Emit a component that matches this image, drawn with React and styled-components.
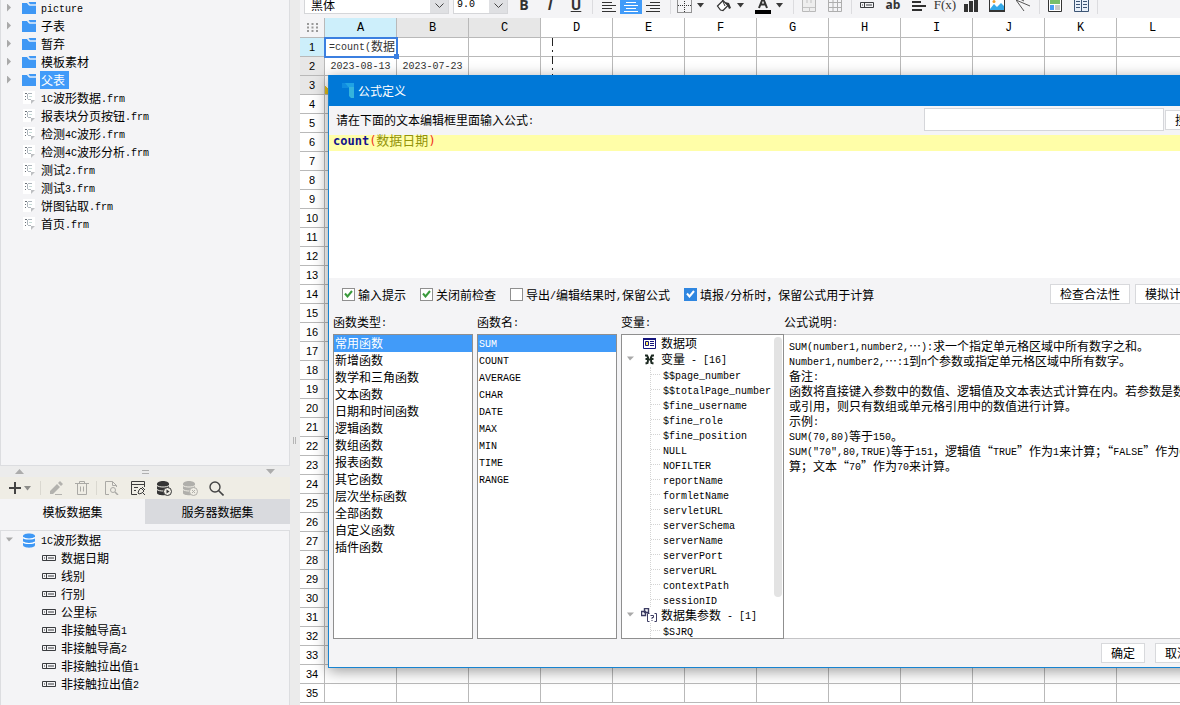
import React, { useState } from "react";
import styled, { createGlobalStyle } from "styled-components";

const folders = ["picture", "子表", "暂弃", "模板素材", "父表"];

const files = [
  "1C波形数据.frm",
  "报表块分页按钮.frm",
  "检测4C波形.frm",
  "检测4C波形分析.frm",
  "测试2.frm",
  "测试3.frm",
  "饼图钻取.frm",
  "首页.frm",
];

const fields = [
  "数据日期",
  "线别",
  "行别",
  "公里标",
  "非接触导高1",
  "非接触导高2",
  "非接触拉出值1",
  "非接触拉出值2",
];

const columns = ["A", "B", "C", "D", "E", "F", "G", "H", "I", "J", "K", "L"];
const rows = Array.from({ length: 35 }, (_, i) => i + 1);
const cells = { A1: "=count(数据", A2: "2023-08-13", B2: "2023-07-23" };

const functionTypes = [
  "常用函数",
  "新增函数",
  "数学和三角函数",
  "文本函数",
  "日期和时间函数",
  "逻辑函数",
  "数组函数",
  "报表函数",
  "其它函数",
  "层次坐标函数",
  "全部函数",
  "自定义函数",
  "插件函数",
];

const functionNames = [
  "SUM",
  "COUNT",
  "AVERAGE",
  "CHAR",
  "DATE",
  "MAX",
  "MIN",
  "TIME",
  "RANGE",
];

const variables = [
  "$$page_number",
  "$$totalPage_number",
  "$fine_username",
  "$fine_role",
  "$fine_position",
  "NULL",
  "NOFILTER",
  "reportName",
  "formletName",
  "servletURL",
  "serverSchema",
  "serverName",
  "serverPort",
  "serverURL",
  "contextPath",
  "sessionID",
];

const description = [
  "SUM(number1,number2,…):求一个指定单元格区域中所有数字之和。",
  "Number1,number2,…:1到n个参数或指定单元格区域中所有数字。",
  "备注:",
  "函数将直接键入参数中的数值、逻辑值及文本表达式计算在内。若参数是数组",
  "或引用，则只有数组或单元格引用中的数值进行计算。",
  "示例:",
  "SUM(70,80)等于150。",
  'SUM("70",80,TRUE)等于151，逻辑值“TRUE”作为1来计算；“FALSE”作为0来计',
  "算；文本“70”作为70来计算。",
];

// latin runs get the half-width face, everything else stays in the CJK face
const Mixed = ({ children }) => (
  <span>
    {children
      .split(/([\x20-\x7e]+)/)
      .filter(Boolean)
      .map((part, i) =>
        /^[\x20-\x7e]/.test(part) ? <Half key={i}>{part}</Half> : part
      )}
  </span>
);

const FolderIcon = () => (
  <svg width="14" height="12" viewBox="0 0 14 12">
    <path d="M0 1h5l2 2.500h7V12H0z" fill="#3f98f5" />
    <path d="M6.500 0H14v2.500H8z" fill="#3f98f5" />
    <path d="M5.500 .5l2 2.500H14" stroke="#d8e9fc" fill="none" />
  </svg>
);

const FileIcon = () => (
  <svg width="12" height="14" viewBox="0 0 12 14">
    <path d="M0 0h12v9l-4 4H0z" fill="#fff" />
    <path d="M8 13V9h4z" fill="#bdbfc2" />
    <path d="M2 2.500h2M2 5.500h1M2 8.500h1" stroke="#6d737a" />
    <path d="M4.500 3v5M5 2.500h4M5 8.500h3" stroke="#aeb6bd" fill="none" />
    <path d="M6 5.500h3" stroke="#c6dcd8" />
  </svg>
);

const DatabaseIcon = () => (
  <svg width="14" height="15" viewBox="0 0 14 15">
    <path
      d="M1 3c0-3.500 12-3.500 12 0v9c0 3.500-12 3.500-12 0z"
      fill="#3f98f5"
    />
    <path
      d="M1 4.500c2 2 10 2 12 0M1 9c2 2 10 2 12 0"
      stroke="#fff"
      strokeWidth="1.200"
      fill="none"
    />
  </svg>
);

const FieldIcon = () => (
  <svg width="14" height="7" viewBox="0 0 14 7">
    <path d="M.5 .5h13v5H.5zM4.500 1v5" fill="none" stroke="#3b3d40" />
    <path d="M2 3h1M6 3h6" stroke="#3b3d40" />
  </svg>
);

const Caret = ({ color = "#3a3a3a" }) => (
  <svg width="7" height="5" viewBox="0 0 7 5">
    <path d="M0 0h7L3.500 4.500z" fill={color} />
  </svg>
);

const Tick = ({ color }) => (
  <svg width="9" height="8" viewBox="0 0 9 8">
    <path d="M1 3.500l2.500 3L8 1" fill="none" stroke={color} strokeWidth="2" />
  </svg>
);

const Chevron = () => (
  <svg width="9" height="5" viewBox="0 0 9 5">
    <path d="M.5.5l4 4 4-4" fill="none" stroke="#444" />
  </svg>
);

const lines = {
  left: "M0 1.500h14M0 4.500h10M0 7.500h14M0 10.500h10M0 13.500h14",
  center: "M0 1.500h14M2 4.500h10M0 7.500h14M2 10.500h10M0 13.500h14",
  right: "M0 1.500h14M4 4.500h10M0 7.500h14M4 10.500h10M0 13.500h14",
};

const AlignIcon = ({ kind, color = "#333" }) => (
  <svg width="14" height="15" viewBox="0 0 14 15">
    <path d={lines[kind]} stroke={color} />
  </svg>
);

const BorderIcon = () => (
  <svg width="15" height="15" viewBox="0 0 15 15">
    <path
      d="M.5.5h14v14H.5zM7.500 1v13M1 7.500h13"
      fill="none"
      stroke="#333"
      strokeDasharray="1 1"
    />
  </svg>
);

const FillIcon = () => (
  <svg width="16" height="15" viewBox="0 0 16 15">
    <path
      d="M1.500 8L7 2.500l5 5L7 12.500 4.500 12z"
      fill="#fff"
      stroke="#333"
      strokeWidth="1.200"
    />
    <path d="M9 4l4 1 2 5-2 1-1.500-3.500z" fill="#333" />
    <path d="M6 1.500L9 8" stroke="#333" />
  </svg>
);

const ColorIcon = () => (
  <svg width="16" height="17" viewBox="0 0 16 17">
    <path
      d="M4 11L8 1l4 10M5.500 7.500h5"
      fill="none"
      stroke="#333"
      strokeWidth="2"
    />
    <path d="M0 13h16v4H0z" fill="#000" />
  </svg>
);

const MergeIcon = () => (
  <svg width="14" height="14" viewBox="0 0 14 14">
    <path d="M.5.5h13v13H.5z" fill="#eee" stroke="#b9b9b9" />
    <path d="M1 9.500h12M7.500 10v4M5 1v4M9 1v4" stroke="#c4c4c4" />
  </svg>
);

const SplitIcon = () => (
  <svg width="14" height="14" viewBox="0 0 14 14">
    <path
      d="M.5.5h13v13H.5zM1 4.500h12M1 9.500h12M5 1v12M9.500 1v12"
      fill="none"
      stroke="#aeaeae"
    />
  </svg>
);

const TextLinesIcon = () => (
  <svg width="14" height="14" viewBox="0 0 14 14">
    <path d="M0 4h9M0 8h14M0 12h10" stroke="#2f2f2f" strokeWidth="2" />
  </svg>
);

const ChartIcon = () => (
  <svg width="14" height="14" viewBox="0 0 14 14">
    <path d="M0 6h4v8H0zM5 3h4v11H5zM10 0h4v14h-4z" fill="#333" />
  </svg>
);

const ImageIcon = () => (
  <svg width="16" height="14" viewBox="0 0 16 14">
    <path d="M.5.5h15v13H.5z" fill="#fff" stroke="#333" />
    <path d="M1 11l4-5 3 3 4-4 3 3v5H1z" fill="#35a9e8" />
    <circle cx="5" cy="3.500" r="1.500" fill="#f0a030" />
    <path d="M0 12h16v2H0z" fill="#333" />
  </svg>
);

const SlashIcon = () => (
  <svg width="14" height="14" viewBox="0 0 14 14">
    <path d="M0 2l14 6M0 2l8 11M2 0l6 3" fill="none" stroke="#555" />
  </svg>
);

const ReportIcon = () => (
  <svg width="14" height="14" viewBox="0 0 14 14">
    <path d="M.5.5h13v13H.5z" fill="#fff" stroke="#333" />
    <path d="M2 2h10v4H2z" fill="#79bf6b" />
    <path d="M2 7h4v5H2z" fill="#4a9df5" />
    <path d="M7 7h5v5H7z" fill="#c9c9c9" />
  </svg>
);

const ColumnsIcon = () => (
  <svg width="15" height="14" viewBox="0 0 15 14">
    <path d="M.5.5h14v13H.5zM7.500 1v13" fill="#e8f0fa" stroke="#3c5575" />
    <path
      d="M2 3.500h4M2 6.500h4M2 9.500h4M9 3.500h4M9 6.500h4M9 9.500h4"
      stroke="#3c5575"
    />
  </svg>
);

const PlusIcon = () => (
  <svg width="12" height="12" viewBox="0 0 12 12">
    <path d="M6 0v12M0 6h12" stroke="#444" strokeWidth="2" />
  </svg>
);

const PencilIcon = () => (
  <svg width="14" height="14" viewBox="0 0 14 14">
    <path d="M1 10l7-7 3 3-7 7H1zM9 2l2-2 3 3-2 2z" fill="#b3b2ae" />
    <path d="M6 13.500h7" stroke="#b3b2ae" />
  </svg>
);

const TrashIcon = () => (
  <svg width="14" height="14" viewBox="0 0 14 14">
    <path
      d="M0 2.500h14M4.500 2V.5h5V2M2.500 3v10.500h9V3M5.500 5.500v5M8.500 5.500v5"
      fill="none"
      stroke="#aaa9a5"
    />
  </svg>
);

const PreviewIcon = () => (
  <svg width="14" height="14" viewBox="0 0 14 14">
    <path d="M4 13.500H.5V.5h7l4 4V6M7.500.5v4h4" fill="none" stroke="#aaa9a5" />
    <circle cx="8" cy="9" r="2.500" fill="none" stroke="#aaa9a5" />
    <path d="M10 11l3 3" stroke="#aaa9a5" strokeWidth="1.500" />
  </svg>
);

const EditSqlIcon = () => (
  <svg width="15" height="14" viewBox="0 0 15 14">
    <path d="M6 13.500H.5V.5h13V6M1 3.500h13" fill="none" stroke="#3d3d3d" />
    <path d="M3 6.500h4M3 9.500h2" stroke="#3d3d3d" />
    <path
      d="M7 12l1-3 2-2 3 3-2 2-3 1zM11 6l3 3M12 12l2 2"
      fill="none"
      stroke="#3d3d3d"
    />
  </svg>
);

const StackIcon = ({ color, cross }) => (
  <svg width="15" height="15" viewBox="0 0 15 15">
    <path d="M0 3c0-4 12-4 12 0v9c0 3-12 3-12 0z" fill={color} />
    <path
      d="M0 4.500c2 2 10 2 12 0M0 8.500c2 2 10 2 12 0"
      stroke="#efede5"
      fill="none"
    />
    <circle cx="10.500" cy="10.500" r="4" fill="#efede5" stroke={color} />
    {cross ? (
      <path d="M9 9l3 3M12 9l-3 3" stroke={color} />
    ) : (
      <path d="M9.500 8.500l3 2-3 2z" fill={color} />
    )}
  </svg>
);

const SearchIcon = () => (
  <svg width="15" height="15" viewBox="0 0 15 15">
    <circle cx="6" cy="6" r="5" fill="none" stroke="#444" strokeWidth="1.400" />
    <path d="M9.500 9.500l5 5" stroke="#444" strokeWidth="1.600" />
  </svg>
);

const DataItemIcon = () => (
  <svg width="13" height="11" viewBox="0 0 13 11">
    <path d="M.5.5h12v10H.5z" fill="#fff" stroke="#14147c" />
    <path d="M0 0h13v2H0z" fill="#14147c" />
    <path d="M2.500 3.500h3v4h-3z" fill="#ffef6a" stroke="#14147c" />
    <path d="M7 3.500h4M7 5.500h4M7 7.500h4" stroke="#14147c" />
  </svg>
);

const VariableIcon = () => (
  <svg width="11" height="11" viewBox="0 0 11 11">
    <path
      d="M1 1.500l2 0 1 2v1.500H1.500M10 1.500H8L7 3.500V5h2.500M1.500 9.500l2-.5.5-2.500M9.500 9.500L7.500 9 7 6.500M3 5.500h5"
      fill="none"
      stroke="#1d2a22"
      strokeWidth="2"
    />
  </svg>
);

const ParamIcon = () => (
  <svg width="16" height="15" viewBox="0 0 16 15">
    <path
      d="M.5 3.500h4v4h-4zM3.500.5h4v4h-4z"
      fill="#fff"
      stroke="#3d3d63"
      strokeWidth="1.400"
    />
    <path
      d="M8.500 5.500H6.500v8h2M13.500 5.500h2v8h-2"
      fill="none"
      stroke="#3d3d63"
    />
    <path d="M9.500 7.500h3v2h-1.500v1.500M11 12v1" fill="none" stroke="#3d3d63" />
  </svg>
);

const Logo = () => (
  <svg width="12" height="15" viewBox="0 0 12 15">
    <path d="M0 0h6v5H0z" fill="#0f8ce0" />
    <path d="M3 0h9v5H7z" fill="#1fa3e4" />
    <path d="M7 4h5v11H9l-2-2z" fill="#35b4dc" />
  </svg>
);

const Check = ({ id, text, tone, start }) => {
  const [on, setOn] = useState(start);
  return (
    <CheckLabel htmlFor={id}>
      <CheckBox $tone={tone} $on={on}>
        <input
          id={id}
          type="checkbox"
          checked={on}
          onChange={(e) => setOn(e.target.checked)}
        />
        {on && <Tick color={tone === "blue" ? "#fff" : "#3a9a3c"} />}
      </CheckBox>
      <Mixed>{text}</Mixed>
    </CheckLabel>
  );
};

const ListBox = ({ label, items }) => {
  const [current, setCurrent] = useState(items[0]);
  return (
    <Panel $width="140px">
      <PanelTitle>
        <Mixed>{label}</Mixed>
      </PanelTitle>
      <List role="listbox" aria-label={label}>
        {items.map((item) => (
          <Option
            key={item}
            role="option"
            aria-selected={item === current}
            $on={item === current}
            onClick={() => setCurrent(item)}
          >
            <Mixed>{item}</Mixed>
          </Option>
        ))}
      </List>
    </Panel>
  );
};

const Sidebar = () => {
  const [tab, setTab] = useState("模板数据集");
  return (
    <Side>
      <FileTree>
        {folders.map((name) => (
          <TreeRow key={name}>
            <Arrow />
            <IconSlot>
              <FolderIcon />
            </IconSlot>
            <TreeName $on={name === "父表"}>
              <Mixed>{name}</Mixed>
            </TreeName>
          </TreeRow>
        ))}
        {files.map((name) => (
          <TreeRow key={name}>
            <Arrow $hidden />
            <IconSlot>
              <FileIcon />
            </IconSlot>
            <TreeName>
              <Mixed>{name}</Mixed>
            </TreeName>
          </TreeRow>
        ))}
      </FileTree>
      <Splitter>
        <svg width="9" height="5" viewBox="0 0 9 5">
          <path d="M0 5h9L4.500 0z" fill="#acacac" />
        </svg>
        <svg width="7" height="4" viewBox="0 0 7 4">
          <path d="M0 .5h7M0 3.500h7" stroke="#b0b0b0" />
        </svg>
        <svg width="9" height="5" viewBox="0 0 9 5">
          <path d="M0 0h9L4.500 5z" fill="#acacac" />
        </svg>
      </Splitter>
      <DataTools>
        <AddButton aria-label="add">
          <PlusIcon />
          <Caret color="#8d8d8a" />
        </AddButton>
        <Bar />
        <DataButton aria-label="edit">
          <PencilIcon />
        </DataButton>
        <DataButton aria-label="delete">
          <TrashIcon />
        </DataButton>
        <Bar />
        <DataButton aria-label="preview">
          <PreviewIcon />
        </DataButton>
        <DataButton aria-label="edit query">
          <EditSqlIcon />
        </DataButton>
        <DataButton aria-label="connect">
          <StackIcon color="#353535" />
        </DataButton>
        <DataButton aria-label="disconnect">
          <StackIcon color="#b0afab" cross />
        </DataButton>
        <DataButton aria-label="search">
          <SearchIcon />
        </DataButton>
      </DataTools>
      <Tabs>
        {["模板数据集", "服务器数据集"].map((name) => (
          <Tab key={name} $on={tab === name} onClick={() => setTab(name)}>
            {name}
          </Tab>
        ))}
      </Tabs>
      <DataTree>
        <TreeRow>
          <Arrow $open />
          <IconSlot>
            <DatabaseIcon />
          </IconSlot>
          <TreeName>
            <Mixed>1C波形数据</Mixed>
          </TreeName>
        </TreeRow>
        {fields.map((name) => (
          <TreeRow key={name} $child>
            <IconSlot>
              <FieldIcon />
            </IconSlot>
            <TreeName>
              <Mixed>{name}</Mixed>
            </TreeName>
          </TreeRow>
        ))}
      </DataTree>
    </Side>
  );
};

const Toolbar = () => (
  <ToolbarClip>
    <Tools>
      <Picker $width="145px">
        <select aria-label="font" defaultValue="黑体">
          <option>黑体</option>
        </select>
        <span>
          <Chevron />
        </span>
      </Picker>
      <Picker $width="55px" $latin>
        <select aria-label="size" defaultValue="9.0">
          <option>9.0</option>
        </select>
        <span>
          <Chevron />
        </span>
      </Picker>
      <Group>
        <Tool $bold>B</Tool>
        <Tool $bold $italic>
          I
        </Tool>
        <Tool $bold $underline>
          U
        </Tool>
      </Group>
      <Group $wide>
        <Tool $narrow aria-label="align left">
          <AlignIcon kind="left" />
        </Tool>
        <Tool $narrow $on aria-label="align center">
          <AlignIcon kind="center" color="#fff" />
        </Tool>
        <Tool $narrow aria-label="align right">
          <AlignIcon kind="right" />
        </Tool>
      </Group>
      <Group>
        <DropTool aria-label="borders">
          <BorderIcon />
          <Caret />
        </DropTool>
        <DropTool aria-label="fill">
          <FillIcon />
          <Caret />
        </DropTool>
        <DropTool aria-label="text color">
          <ColorIcon />
          <Caret />
        </DropTool>
      </Group>
      <Group>
        <Tool aria-label="merge">
          <MergeIcon />
        </Tool>
        <Tool aria-label="split">
          <SplitIcon />
        </Tool>
      </Group>
      <Group>
        <Tool aria-label="field">
          <FieldIcon />
        </Tool>
        <Tool $small>ab</Tool>
        <Tool aria-label="rich text">
          <TextLinesIcon />
        </Tool>
        <Tool $serif>F(x)</Tool>
        <Tool aria-label="chart">
          <ChartIcon />
        </Tool>
        <Tool aria-label="image">
          <ImageIcon />
        </Tool>
        <Tool aria-label="slash">
          <SlashIcon />
        </Tool>
      </Group>
      <Group>
        <Tool aria-label="sub report">
          <ReportIcon />
        </Tool>
        <Tool aria-label="columns">
          <ColumnsIcon />
        </Tool>
      </Group>
    </Tools>
  </ToolbarClip>
);

const Sheet = () => (
  <SheetArea>
    <Grid>
      <colgroup>
        <col width="25" />
        {columns.map((c) => (
          <col key={c} width="72" />
        ))}
      </colgroup>
      <thead>
        <tr>
          <Corner>
            <svg width="11" height="9" viewBox="0 0 11 9">
              <path
                d="M0 1h11M0 4.500h11M0 8h11"
                stroke="#999"
                strokeWidth="2"
                strokeDasharray="2 2.500"
              />
            </svg>
          </Corner>
          {columns.map((c, i) => (
            <ColHead key={c} $active={i === 0} $used={i < 3}>
              {c}
            </ColHead>
          ))}
        </tr>
      </thead>
      <tbody>
        {rows.map((r) => (
          <tr key={r}>
            <RowHead $active={r === 1} $used={r <= 3}>
              {r}
            </RowHead>
            {columns.map((c) => (
              <Cell
                key={c}
                $active={c + r === "A1"}
                $marked={c + r === "A3"}
              >
                {cells[c + r] && (
                  <CellText>
                    <Mixed>{cells[c + r]}</Mixed>
                  </CellText>
                )}
              </Cell>
            ))}
          </tr>
        ))}
      </tbody>
    </Grid>
    <PageEdge />
    <Handle />
  </SheetArea>
);

const Dialog = () => (
  <Window role="dialog" aria-label="公式定义">
    <TitleBar>
      <Logo />
      公式定义
    </TitleBar>
    <SearchRow>
      <label htmlFor="search">
        <Mixed>请在下面的文本编辑框里面输入公式:</Mixed>
      </label>
      <SearchInput id="search" />
      <Button>搜索</Button>
    </SearchRow>
    <Editor>
      <CodeLine>
        <b>count</b>
        <i>(</i>
        <span>数据日期</span>
        <i>)</i>
      </CodeLine>
    </Editor>
    <CheckRow>
      <Check id="hint" text="输入提示" start />
      <Check id="verify" text="关闭前检查" start />
      <Check id="export" text="导出/编辑结果时,保留公式" start={false} />
      <Check
        id="analyse"
        text="填报/分析时，保留公式用于计算"
        tone="blue"
        start
      />
      <Buttons>
        <Button>检查合法性</Button>
        <Button>模拟计算</Button>
      </Buttons>
    </CheckRow>
    <Panels>
      <ListBox label="函数类型:" items={functionTypes} />
      <ListBox label="函数名:" items={functionNames} />
      <PanelPair>
        <Panel $width="163px">
          <PanelTitle>
            <Mixed>变量:</Mixed>
          </PanelTitle>
          <VarTree>
            <VarRow>
              <Arrow $hidden />
              <VarIcon>
                <DataItemIcon />
              </VarIcon>
              <Mixed>数据项</Mixed>
            </VarRow>
            <VarRow>
              <Arrow $open />
              <VarIcon>
                <VariableIcon />
              </VarIcon>
              <Mixed>变量 - [16]</Mixed>
            </VarRow>
            <Branch>
              {variables.map((name) => (
                <VarRow key={name} $leaf>
                  <Mixed>{name}</Mixed>
                </VarRow>
              ))}
            </Branch>
            <VarRow>
              <Arrow $open />
              <VarIcon>
                <ParamIcon />
              </VarIcon>
              <Mixed>数据集参数 - [1]</Mixed>
            </VarRow>
            <Branch>
              <VarRow $leaf>
                <Mixed>$SJRQ</Mixed>
              </VarRow>
            </Branch>
            <Thumb />
          </VarTree>
        </Panel>
        <Panel>
          <PanelTitle>
            <Mixed>公式说明:</Mixed>
          </PanelTitle>
          <Description>
            {description.map((line) => (
              <p key={line}>
                <Mixed>{line}</Mixed>
              </p>
            ))}
          </Description>
        </Panel>
      </PanelPair>
    </Panels>
    <Footer>
      <Button>确定</Button>
      <Button>取消</Button>
    </Footer>
  </Window>
);

const App = () => {
  return (
    <Page lang="zh-CN">
      <Global />
      <Sidebar />
      <Gutter>
        <svg width="3" height="7" viewBox="0 0 3 7">
          <path d="M.5 0v7M2.500 0v7" stroke="#b5b5b5" />
        </svg>
      </Gutter>
      <Main>
        <Toolbar />
        <Sheet />
        <Dialog />
      </Main>
    </Page>
  );
};

export default App;

const Global = createGlobalStyle`
  * {
    box-sizing: border-box;
  }
  body {
    margin: 0;
    font-family: "Noto Sans CJK SC", sans-serif;
    font-size: 12px;
    color: #000;
  }
  button, input, select {
    font: inherit;
    color: inherit;
    margin: 0;
  }
  button {
    padding: 0;
    border: none;
    background: none;
  }
  svg {
    display: block;
    flex: none;
  }
`;

const Page = styled.div`
  display: flex;
  height: 100vh;
  overflow: hidden;
  background-color: #f4f4f6;
`;

const Half = styled.span`
  font-family: "Liberation Mono", monospace;
  font-size: 10px;
  line-height: 10px;
  vertical-align: 1px;
  white-space: pre;
`;

const Side = styled.aside`
  width: 290px;
  flex: none;
  display: flex;
  flex-direction: column;
`;

const FileTree = styled.div`
  flex: 0 0 467px;
  margin-top: -1px;
  border: 1px solid #dcdde0;
  border-top: none;
`;

const TreeRow = styled.div`
  height: 18px;
  display: flex;
  align-items: center;
  padding-left: ${({ $child }) => ($child ? "37px" : "4px")};
`;

const Arrow = styled.span`
  width: 9px;
  height: 9px;
  flex: none;
  visibility: ${({ $hidden }) => ($hidden ? "hidden" : "visible")};
  background-color: #a9a9a9;
  clip-path: ${({ $open }) =>
    $open
      ? "polygon(1px 2px, 8px 2px, 4px 6px)"
      : "polygon(2px 0, 6px 4px, 2px 8px)"};
`;

const IconSlot = styled.span`
  width: 22px;
  display: flex;
  justify-content: center;
  flex: none;
  ${TreeRow} > span + & {
    margin-left: 4px;
  }
`;

const TreeName = styled.span`
  line-height: 18px;
  padding: 0 4px 0 1px;
  white-space: nowrap;
  color: ${({ $on }) => ($on ? "#fff" : "#000")};
  background-color: ${({ $on }) => ($on ? "#419bf9" : "transparent")};
`;

const Splitter = styled.div`
  height: 11px;
  flex: none;
  display: flex;
  align-items: center;
  justify-content: space-between;
  padding: 0 15px;
  background-color: #ececec;
`;

const DataTools = styled.div`
  height: 22px;
  flex: none;
  display: flex;
  align-items: center;
  background-color: #efede5;
`;

const AddButton = styled.button`
  width: 39px;
  height: 22px;
  display: flex;
  align-items: center;
  gap: 3px;
  padding-left: 9px;
`;

const DataButton = styled.button`
  width: 26px;
  height: 22px;
  display: flex;
  align-items: center;
  justify-content: center;
`;

const Bar = styled.span`
  width: 1px;
  height: 14px;
  margin: 0 2px 0 1px;
  background-color: #dad8d0;
`;

const Tabs = styled.div`
  flex: none;
  display: flex;
  padding-bottom: 6px;
`;

const Tab = styled.button`
  flex: 1;
  height: 25px;
  background-color: ${({ $on }) => ($on ? "#f4f4f6" : "#d9dade")};
`;

const DataTree = styled.div`
  flex: 1;
  border: 1px solid #dcdde0;
  border-bottom: none;
`;

const Gutter = styled.div`
  width: 10px;
  flex: none;
  display: flex;
  align-items: center;
  padding: 176px 0 0 3px;
  background-color: #ebebeb;
`;

const Main = styled.main`
  flex: 1;
  min-width: 0;
  position: relative;
  overflow: hidden;
  display: flex;
  flex-direction: column;
`;

const ToolbarClip = styled.div`
  height: 18px;
  flex: none;
  display: flex;
  align-items: flex-end;
  overflow: hidden;
`;

const Tools = styled.div`
  height: 26px;
  display: flex;
  align-items: center;
  padding-left: 4px;
`;

const Picker = styled.div`
  width: ${({ $width }) => $width};
  height: 18px;
  flex: none;
  display: flex;
  margin-right: ${({ $latin }) => ($latin ? "1px" : "4px")};
  border: 1px solid #d5d6d9;
  background-color: #fff;

  select {
    flex: 1;
    min-width: 0;
    appearance: none;
    border: none;
    outline: none;
    background: none;
    padding: 0 0 0 ${({ $latin }) => ($latin ? "3px" : "6px")};
    font-family: ${({ $latin }) =>
      $latin ? '"Liberation Mono", monospace' : "inherit"};
    font-size: ${({ $latin }) => ($latin ? "10px" : "12px")};
    line-height: 16px;
  }

  span {
    width: 18px;
    display: flex;
    align-items: center;
    justify-content: center;
    background-color: #dfe0e3;
  }
`;

const Group = styled.div`
  display: flex;
  align-items: center;
  padding: ${({ $wide }) => ($wide ? "0 6px 0 5px" : "0 3px 0 2px")};
  border-right: 1px solid #dcdcdf;
`;

const Tool = styled.button`
  width: ${({ $narrow }) => ($narrow ? "22px" : "26px")};
  height: 18px;
  display: flex;
  align-items: center;
  justify-content: center;
  font-family: ${({ $serif }) =>
    $serif ? '"Liberation Serif", serif' : '"Open Sans", sans-serif'};
  font-size: ${({ $small, $serif }) =>
    $small ? "12px" : $serif ? "13px" : "14px"};
  line-height: 10px;
  font-weight: ${({ $bold, $small }) => ($bold || $small ? "700" : "400")};
  font-style: ${({ $italic }) => ($italic ? "italic" : "normal")};
  text-decoration: ${({ $underline }) => ($underline ? "underline" : "none")};
  color: #333;
  background-color: ${({ $on }) => ($on ? "#419bf9" : "transparent")};
`;

const DropTool = styled.button`
  width: 39px;
  height: 18px;
  display: flex;
  align-items: center;
  gap: 5px;
  padding-left: 4px;
`;

const SheetArea = styled.div`
  flex: 1;
  position: relative;
  overflow: hidden;
  background-color: #fff;
`;

const Grid = styled.table`
  width: 889px;
  table-layout: fixed;
  border-collapse: separate;
  border-spacing: 0;

  th,
  td {
    height: 19px;
    padding: 0;
    overflow: hidden;
    border: 0 solid #b9b9b9;
    border-width: 0 1px 1px 0;
    font-weight: 400;
    line-height: 18px;
    white-space: nowrap;
    text-align: center;
  }
`;

const headColor = ({ $active, $used }) =>
  $active ? "#cdeffb" : $used ? "#e7e7e7" : "#fff";

const Corner = styled.th`
  background-color: #f4f4f6;
  svg {
    margin: 0 auto;
  }
`;

const ColHead = styled.th`
  && {
    height: 20px;
  }
  font-family: "Liberation Mono", monospace;
  font-size: 12px;
  background-color: ${headColor};
`;

const RowHead = styled.th`
  font-family: "Liberation Sans", sans-serif;
  font-size: 11px;
  background-color: ${headColor};
`;

const Cell = styled.td`
  color: #333;
  background: ${({ $marked }) =>
    $marked ? "linear-gradient(45deg, #e3c11c 6px, transparent 6px)" : "none"};
  && {
    text-align: ${({ $active }) => ($active ? "left" : "center")};
    padding-left: ${({ $active }) => ($active ? "4px" : "0")};
    outline: ${({ $active }) => ($active ? "2px solid #3b7fe0" : "none")};
    outline-offset: -1px;
  }
`;

const CellText = styled.div`
  height: 18px;
  line-height: 16px;
`;

// the drag handle sits on the corner of the selected cell
const Handle = styled.div`
  position: absolute;
  top: 36px;
  left: 94px;
  width: 5px;
  height: 5px;
  background-color: #3b7fe0;
`;

const PageEdge = styled.div`
  position: absolute;
  top: 20px;
  left: 25px;
  width: 228px;
  height: 401px;
  border-bottom: 1px solid #222;
  pointer-events: none;

  &::after {
    content: "";
    position: absolute;
    top: 0;
    bottom: 0;
    right: 0;
    width: 1px;
    background: repeating-linear-gradient(
      #222 0 8px,
      transparent 8px 12px,
      #222 12px 14px,
      transparent 14px 18px
    );
  }
`;

const Window = styled.section`
  position: absolute;
  top: 75px;
  left: 28px;
  right: -30px;
  border: 1px solid #1883d0;
  border-top: none;
  background-color: #f4f4f6;
  box-shadow: 0 3px 14px rgba(0, 0, 0, 0.4);
`;

const TitleBar = styled.header`
  height: 31px;
  display: flex;
  align-items: center;
  gap: 4px;
  padding-left: 13px;
  color: #fff;
  background-color: #0078d7;
`;

const SearchRow = styled.div`
  height: 29px;
  display: flex;
  align-items: center;
  gap: 1px;
  padding: 0 0 2px 7px;

  label {
    flex: 1;
    line-height: 16px;
  }
`;

const SearchInput = styled.input`
  width: 240px;
  height: 23px;
  border: 1px solid #d5d6da;
  outline: none;
  background-color: #fff;
`;

const Button = styled.button`
  height: 20px;
  padding: 0 9px;
  border: 1px solid #d8d9dc;
  line-height: 18px;
  white-space: nowrap;
  background-color: #fff;
`;

const Editor = styled.div`
  height: 143px;
  background-color: #fff;
`;

const CodeLine = styled.code`
  display: block;
  padding-left: 4px;
  font-family: "DejaVu Sans Mono", "Noto Sans CJK SC", monospace;
  font-size: 12px;
  line-height: 12px;
  height: 16px;
  background-color: #fffea8;

  b {
    color: #12128c;
  }
  i {
    font-style: normal;
    color: #f03020;
  }
  span {
    font-size: 13px;
    color: #93930a;
  }
`;

const CheckRow = styled.div`
  height: 32px;
  display: flex;
  align-items: center;
  gap: 14px;
  padding: 0 6px 0 13px;
`;

const CheckLabel = styled.label`
  display: flex;
  align-items: center;
  gap: 3px;
  white-space: nowrap;
`;

const CheckBox = styled.span`
  position: relative;
  width: 13px;
  height: 13px;
  border: 1px solid
    ${({ $tone, $on }) => ($tone === "blue" && $on ? "#2f86e0" : "#8f8f8f")};
  background-color: ${({ $tone, $on }) =>
    $tone === "blue" && $on ? "#2f86e0" : "#fff"};

  input {
    position: absolute;
    inset: 0;
    opacity: 0;
  }
  svg {
    margin: 1px;
  }
`;

const Buttons = styled.div`
  display: flex;
  gap: 5px;
  margin-left: auto;
`;

const Panels = styled.div`
  display: flex;
  gap: 4px;
  padding-left: 4px;
`;

const PanelPair = styled.div`
  flex: 1;
  min-width: 0;
  display: flex;
`;

const Panel = styled.div`
  flex: ${({ $width }) => ($width ? `0 0 ${$width}` : "1")};
  min-width: 0;
  display: flex;
  flex-direction: column;
`;

const PanelTitle = styled.div`
  height: 24px;
  line-height: 24px;
`;

const List = styled.ul`
  height: 305px;
  margin: 0;
  padding: 0;
  list-style: none;
  border: 1px solid #8f8f8f;
  background-color: #fff;
`;

const Option = styled.li`
  height: 17px;
  line-height: 15px;
  padding-left: 1px;
  white-space: nowrap;
  color: ${({ $on }) => ($on ? "#fff" : "#000")};
  background-color: ${({ $on }) => ($on ? "#419bf9" : "transparent")};
`;

const VarTree = styled.div`
  position: relative;
  height: 305px;
  overflow: hidden;
  border: 1px solid #8f8f8f;
  background-color: #fff;
`;

const VarRow = styled.div`
  height: ${({ $leaf }) => ($leaf ? "15px" : "16px")};
  line-height: 14px;
  display: flex;
  align-items: center;
  padding-left: ${({ $leaf }) => ($leaf ? "12px" : "4px")};
  white-space: nowrap;
`;

const Branch = styled.div`
  margin-left: 28px;
  border-left: 1px dotted #d4d4d4;

  ${VarRow}::before {
    content: "";
    width: 9px;
    margin: 0 3px 0 -12px;
    border-top: 1px dotted #d4d4d4;
  }
`;

const VarIcon = styled.span`
  width: 16px;
  margin: 0 4px 0 6px;
  display: flex;
  justify-content: center;
`;

const Thumb = styled.div`
  position: absolute;
  top: 2px;
  right: 1px;
  width: 8px;
  height: 260px;
  border-radius: 4px;
  background-color: #e3e3e3;
`;

const Description = styled.div`
  height: 305px;
  padding: 3px 0 0 5px;
  overflow: hidden;
  border-top: 1px solid #c4c4c6;
  border-bottom: 1px solid #c4c4c6;
  background-color: #fff;

  p {
    margin: 0;
    height: 15px;
    line-height: 15px;
    white-space: nowrap;
  }
`;

const Footer = styled.footer`
  height: 28px;
  display: flex;
  align-items: center;
  justify-content: flex-end;
  gap: 10px;
  padding-right: 10px;
`;
